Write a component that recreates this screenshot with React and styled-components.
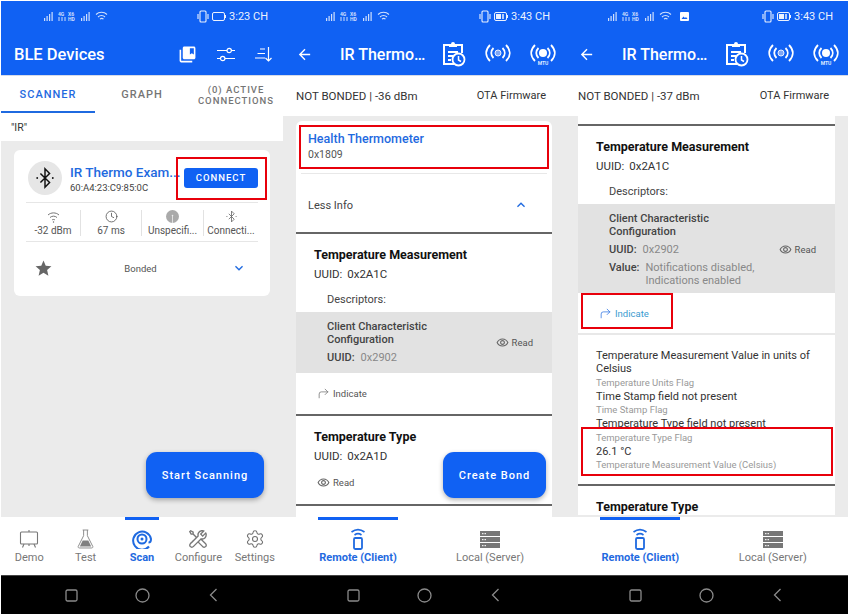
import React from 'react'
import styled, { createGlobalStyle } from 'styled-components'
import { Clock, CornerUpRight, Settings } from 'lucide-react'
import { MdStar, MdKeyboardArrowDown, MdKeyboardArrowUp, MdOutlineRemoveRedEye, MdCollectionsBookmark, MdArrowBack } from 'react-icons/md'
import { LiaToolsSolid } from 'react-icons/lia'

const BLUE = '#1061f3'

const GlobalStyle = createGlobalStyle`
	html, body {
		margin: 0;
		background: #fff;
		font-family: Roboto, 'Liberation Sans', sans-serif;
	}
`

const Page = styled.div`
	display: grid;
	grid-template-columns: 282px 282px 283px;
	padding: 1px 0 0 1px;
	width: 849px;
	box-sizing: border-box;
`

const Phone = styled.div`
	position: relative;
	display: flex;
	flex-direction: column;
	height: 613px;
	overflow: hidden;
	background: #ebebeb;
`

const StatusRow = styled.div`
	display: flex;
	align-items: center;
	justify-content: space-between;
	height: 30px;
	padding: 0 15px 0 43px;
	background: ${BLUE};
	color: #fff;
	flex: none;
`

const StatusLeft = styled.div`
	display: flex;
	align-items: center;
	gap: 8px;
`

const StatusRight = styled.div`
	display: flex;
	align-items: center;
	gap: 3px;
	font-size: 11px;
	opacity: 0.92;
`

const Toolbar = styled.div`
	display: flex;
	align-items: center;
	height: 42px;
	padding: 2px ${(p) => p.$pad || 11}px 0 13px;
	background: ${BLUE};
	border-bottom: 1px solid #d5dbe8;
	color: #fff;
	flex: none;
`

const ToolbarTitle = styled.div`
	flex: 1;
	font-size: ${(p) => (p.$detail ? 16 : 16.5)}px;
	font-weight: 500;
	margin-left: ${(p) => (p.$detail ? 27 : 0)}px;
`

const ToolbarIcons = styled.div`
	display: flex;
	align-items: center;
	gap: ${(p) => p.$gap}px;
`

const Tabs = styled.div`
	display: grid;
	grid-template-columns: repeat(3, 94px);
	height: 37px;
	background: #fff;
	flex: none;
`

const Tab = styled.div`
	display: flex;
	align-items: center;
	justify-content: center;
	padding-top: 2px;
	text-align: center;
	font-size: ${(p) => (p.$small ? 9.5 : 11)}px;
	line-height: 11px;
	font-weight: 500;
	letter-spacing: 1px;
	color: ${(p) => (p.$active ? '#1f6ae0' : '#757575')};
	border-bottom: 2px solid ${(p) => (p.$active ? '#1f6ae0' : 'transparent')};
`

const FilterRow = styled.div`
	height: 28px;
	padding-left: 10px;
	line-height: 30px;
	font-size: 10.5px;
	color: #333;
	background: #fff;
	flex: none;
`

const Content = styled.div`
	position: relative;
	flex: 1;
	min-height: 0;
	overflow: hidden;
`

const DeviceCard = styled.div`
	margin: 9px 13px 0;
	height: 146px;
	padding: 0 12px;
	background: #fff;
	border-radius: 6px;
	box-sizing: border-box;
`

const DeviceHead = styled.div`
	display: flex;
	align-items: center;
	height: 48px;
	padding-top: 4px;
	border-bottom: 1px solid #e6e6e6;
`

const Avatar = styled.div`
	display: flex;
	align-items: center;
	justify-content: center;
	width: 34px;
	height: 34px;
	margin-left: 2px;
	border-radius: 50%;
	background: #e6e6e6;
	flex: none;
`

const DeviceText = styled.div`
	width: 106px;
	margin-left: 8px;
`

const DeviceName = styled.div`
	font-size: 13.5px;
	font-weight: 500;
	color: #1f6ae0;
	white-space: nowrap;
`

const DeviceAddress = styled.div`
	margin-top: 2px;
	font-size: 9.5px;
	color: #444;
	white-space: nowrap;
`

const ConnectButton = styled.div`
	width: 74px;
	height: 20px;
	margin-left: 8px;
	border-radius: 3px;
	background: ${BLUE};
	color: #fff;
	font-size: 9.5px;
	font-weight: 500;
	letter-spacing: 1px;
	line-height: 20px;
	text-align: center;
`

const Stats = styled.div`
	display: grid;
	grid-template-columns: 54px 61px 62px 55px;
	height: 38px;
	border-bottom: 1px solid #e6e6e6;
`

const Stat = styled.div`
	display: flex;
	flex-direction: column;
	align-items: center;
	justify-content: center;
	gap: 2px;
	margin: 7px 0 5px;
	font-size: 10px;
	color: #555;
	white-space: nowrap;
	border-left: ${(p) => (p.$first ? 'none' : '1px solid #e2e2e2')};
`

const StatIcon = styled.div`
	display: flex;
	align-items: center;
	justify-content: center;
	height: 13px;
	color: #555;
`

const BondRow = styled.div`
	display: grid;
	grid-template-columns: 1fr auto 1fr;
	align-items: center;
	height: 52px;
	padding: 0 11px 0 8px;
	font-size: 9.5px;
	color: #555;
`

const ChevronCell = styled.div`
	display: flex;
	justify-content: flex-end;
	color: #1f6ae0;
`

const Fab = styled.div`
	position: absolute;
	right: 19px;
	bottom: 19px;
	width: ${(p) => p.$width}px;
	height: 46px;
	border-radius: 11px;
	background: ${BLUE};
	color: #fff;
	font-size: 11px;
	font-weight: 500;
	letter-spacing: 1px;
	line-height: 48px;
	text-align: center;
	box-shadow: 0 2px 5px rgba(0, 0, 0, 0.3);
`

const InfoRow = styled.div`
	display: flex;
	justify-content: space-between;
	height: 40px;
	padding: 0 19px 0 13px;
	background: #fff;
	font-size: 11.5px;
	line-height: 40px;
	color: #333;
	flex: none;
`

const OtaLabel = styled.span`
	font-size: 11px;
`

const ServiceCard = styled.div`
	margin: ${(p) => (p.$scrolled ? 0 : 5)}px 13px 0;
	padding-top: ${(p) => (p.$scrolled ? 8 : 0)}px;
	background: #fff;
	border-radius: ${(p) => (p.$scrolled ? 0 : '6px 6px 0 0')};
`

const ServiceHead = styled.div`
	height: 52px;
	padding: 11px 12px 0;
	box-sizing: border-box;
`

const ServiceName = styled.div`
	font-size: 12.5px;
	font-weight: 500;
	color: #1f6ae0;
	line-height: 14px;
`

const ServiceId = styled.div`
	margin-top: 2px;
	font-size: 10.5px;
	color: #555;
`

const LessInfo = styled.div`
	display: flex;
	align-items: center;
	justify-content: space-between;
	height: 59px;
	margin: 0 5px;
	padding: 4px 18px 0 7px;
	border-top: 1px solid #e8e8e8;
	font-size: 11px;
	color: #444;
	box-sizing: border-box;
`

const Characteristic = styled.div`
	border-top: 2px solid #666;
	padding-top: 13px;
`

const CharTitle = styled.div`
	padding-left: 18px;
	font-size: 12.5px;
	font-weight: 700;
	line-height: 16px;
	color: #111;
`

const CharUuid = styled.div`
	margin-top: 3px;
	padding-left: 18px;
	font-size: 11.5px;
	line-height: 16px;
	color: #333;
	word-spacing: 2px;
`

const DescriptorsLabel = styled.div`
	margin: 10px 0 4px;
	padding-left: 31px;
	font-size: 11px;
	line-height: 16px;
	color: #444;
`

const DescriptorRow = styled.div`
	display: flex;
	align-items: center;
	justify-content: space-between;
	padding: 8px 19px ${(p) => (p.$withValue ? 6 : 9)}px 31px;
	background: #e2e2e2;
`

const DescriptorName = styled.div`
	font-size: 11px;
	font-weight: 500;
	line-height: 13px;
	color: #444;
`

const DescriptorLine = styled.div`
	display: flex;
	gap: 6px;
	margin-top: 5px;
	font-size: 11px;
	line-height: 13px;
	color: #888;
`

const DescriptorKey = styled.span`
	font-weight: 500;
	color: #444;
`

const Action = styled.div`
	display: flex;
	align-items: center;
	gap: 3px;
	font-size: 9.5px;
	color: ${(p) => (p.$blue ? '#3a9bd0' : '#555')};
`

const ActionIcon = styled.span`
	display: flex;
	color: ${(p) => (p.$blue ? '#1f6ae0' : '#666')};
`

const ActionRow = styled.div`
	display: flex;
	align-items: center;
	height: ${(p) => p.$height}px;
	padding: 0 0 ${(p) => p.$lift || 0}px 21px;
`

const ValueBlock = styled.div`
	border-top: 2px solid #e8e8e8;
	padding: 14px 14px 12px 18px;
`

const ValueMain = styled.div`
	font-size: 11px;
	line-height: 13px;
	color: #333;
`

const ValueSub = styled.div`
	margin: 0.75px 0;
	font-size: 9.5px;
	line-height: 13px;
	color: #999;
`

const BottomNav = styled.div`
	display: grid;
	grid-template-columns: repeat(${(p) => p.$cols}, 1fr);
	height: 58px;
	padding: 0 ${(p) => p.$pad || 0}px;
	background: #fff;
	flex: none;
`

const NavItem = styled.div`
	position: relative;
	display: flex;
	flex-direction: column;
	align-items: center;
	padding-top: 11px;
	font-size: 11px;
	font-weight: ${(p) => (p.$active ? 700 : 400)};
	color: ${(p) => (p.$active ? '#1f6ae0' : '#777')};
	white-space: nowrap;
`

const NavIcon = styled.div`
	display: flex;
	align-items: center;
	justify-content: center;
	height: 22px;
	margin-bottom: 1px;
`

const NavMark = styled.span`
	position: absolute;
	top: 0;
	left: 50%;
	width: ${(p) => p.$width}px;
	height: 3px;
	margin-left: ${(p) => -p.$width / 2}px;
	background: ${BLUE};
`

const SystemBar = styled.div`
	display: grid;
	grid-template-columns: repeat(3, 71px);
	justify-content: center;
	align-items: center;
	height: 39px;
	background: #000;
	border-top: 1px solid #444;
	box-sizing: border-box;
	flex: none;
`

const SystemCell = styled.div`
	display: flex;
	justify-content: center;
`

const Callout = styled.div`
	position: absolute;
	left: ${(p) => p.$x}px;
	top: ${(p) => p.$y}px;
	width: ${(p) => p.$w}px;
	height: ${(p) => p.$h}px;
	border: 2px solid #e8000b;
	box-sizing: border-box;
	pointer-events: none;
`

function SignalIcons() {
	return (
		<svg width="64" height="12" viewBox="0 0 64 12" fill="#fff" opacity="0.8">
			<rect x="0" y="8" width="1.2" height="3" />
			<rect x="2.5" y="6" width="1.2" height="5" />
			<rect x="5" y="4" width="1.2" height="7" />
			<rect x="7.5" y="2" width="1.2" height="9" />
			<text x="14" y="5.5" fontSize="5" fontWeight="700" fontFamily="Roboto">4G</text>
			<path d="M15 7v4M18 7v4M21 7v4" stroke="#fff" strokeWidth="1" />
			<text x="24" y="5.5" fontSize="5" fontWeight="700" fontFamily="Roboto">X6</text>
			<text x="24" y="11" fontSize="5" fontWeight="700" fontFamily="Roboto">HD</text>
			<rect x="37" y="8" width="1.2" height="3" />
			<rect x="39.5" y="6" width="1.2" height="5" />
			<rect x="42" y="4" width="1.2" height="7" />
			<rect x="44.5" y="2" width="1.2" height="9" />
			<g fill="none" stroke="#fff" strokeWidth="1.1">
				<path d="M52 4.5c3-3 8-3 11 0" />
				<path d="M54 7c2-2 5-2 7 0" />
				<path d="M56 9.2c1-1 2.500-1 3.500 0" />
			</g>
		</svg>
	)
}

function PictureIcon() {
	return (
		<svg width="9" height="9" viewBox="0 0 9 9">
			<rect width="9" height="9" rx="1" fill="#fff" />
			<path d="M1.500 7l2-2.500 1.500 1.500 1-1 1.500 2z" fill={BLUE} />
		</svg>
	)
}

function VibrateIcon() {
	return (
		<svg width="12" height="13" viewBox="0 0 12 13" fill="none" stroke="#fff" strokeWidth="1.1">
			<rect x="3" y="1" width="6" height="11" rx="1" />
			<path d="M1 4v5M11 4v5" />
		</svg>
	)
}

function BatteryIcon({ charged }) {
	return (
		<svg width="14" height="9" viewBox="0 0 14 9" fill="none" stroke="#fff" strokeWidth="1">
			<rect x="0.500" y="0.500" width="12" height="8" rx="1.500" />
			{charged && <rect x="2" y="2" width="5" height="5" fill="#fff" stroke="none" />}
			{charged && <path d="M9 2v5" strokeWidth="1.500" />}
			<path d="M13.500 3v3" />
		</svg>
	)
}

function StatusBar({ time, charged, picture }) {
	return (
		<StatusRow>
			<StatusLeft>
				<SignalIcons />
				{picture && <PictureIcon />}
			</StatusLeft>
			<StatusRight>
				<VibrateIcon />
				<BatteryIcon charged={charged} />
				<span>{time}</span>
			</StatusRight>
		</StatusRow>
	)
}

function TuneIcon() {
	return (
		<svg width="18" height="15" viewBox="0 0 18 15" fill="none" stroke="#fff" strokeWidth="1.200">
			<path d="M0 3.500h10M14.500 3.500H18M0 11.500h3.500M8 11.500h10" />
			<circle cx="12.200" cy="3.500" r="2.200" />
			<circle cx="5.700" cy="11.500" r="2.200" />
		</svg>
	)
}

function SortIcon() {
	return (
		<svg width="17" height="15" viewBox="0 0 17 15" fill="none" stroke="#fff" strokeWidth="1.200">
			<path d="M5 2h5M2.500 6.500H10M0 11h10M13.500 0v14M10.500 11l3 3 3-3" />
		</svg>
	)
}

function ClipboardClockIcon() {
	return (
		<svg width="24" height="26" viewBox="0 0 24 26" fill="none" stroke="#fff" strokeWidth="2">
			<path d="M8 4H2v19h10" />
			<path d="M14 4h6v8" />
			<path d="M7 6V3h2a2 2 0 0 1 4 0h2v3z" fill="#fff" stroke="none" />
			<path d="M6 11h10M6 15h5M6 19h3" strokeWidth="1.800" />
			<circle cx="16.500" cy="18.500" r="6" fill={BLUE} strokeWidth="1.800" />
			<path d="M16.500 15v4l2.500 1.500" strokeWidth="1.500" />
		</svg>
	)
}

function BroadcastIcon({ mtu }) {
	return (
		<svg width="26" height="24" viewBox="0 0 26 24" fill="none" stroke="#fff" strokeWidth="1.800">
			<path d="M5 3C0 8 0 14 5 19M21 3c5 5 5 11 0 16" />
			<path d="M8.500 6c-3 3-3 7 0 10M17.500 6c3 3 3 7 0 10" />
			{mtu ? (
				<>
					<circle cx="13" cy="11" r="4" fill="#fff" stroke="none" />
					<text x="13" y="22.500" fontSize="5" fontWeight="700" fontFamily="Roboto" fill="#dfe8ff" stroke="none" textAnchor="middle">MTU</text>
				</>
			) : (
				<circle cx="13" cy="11" r="3" strokeWidth="1" fill="#7ea6f5" stroke="#e8efff" />
			)}
		</svg>
	)
}

function BluetoothGlyph({ size, color, width }) {
	return (
		<svg width={size} height={size} viewBox="0 0 24 24" fill="none" stroke={color} strokeWidth={width}>
			<path d="M7 7l10 10-5 5V2l5 5L7 17" />
			<circle cx="3.500" cy="12" r="1" fill={color} stroke="none" />
			<circle cx="20.500" cy="12" r="1" fill={color} stroke="none" />
		</svg>
	)
}

function WifiThin() {
	return (
		<svg width="13" height="12" viewBox="0 0 13 12" fill="none" stroke="#666" strokeWidth="0.900">
			<path d="M1 4c3-2.800 8-2.800 11 0M3 6.500c2-1.800 5-1.800 7 0M5 9c.8-.7 2.200-.7 3 0" />
			<circle cx="6.500" cy="11" r="0.700" fill="#666" stroke="none" />
		</svg>
	)
}

function UnspecifiedIcon() {
	return (
		<svg width="13" height="13" viewBox="0 0 13 13">
			<circle cx="6.500" cy="6.500" r="6.500" fill="#aaa" />
			<path d="M6.500 6v7" stroke="#eee" strokeWidth="0.800" />
			<circle cx="6.500" cy="5.500" r="0.800" fill="#eee" />
		</svg>
	)
}

function DemoIcon() {
	return (
		<svg width="20" height="20" viewBox="0 0 20 20" fill="none" stroke="#777" strokeWidth="1.100">
			<path d="M10 1v2" />
			<rect x="1.500" y="3" width="17" height="12" rx="1" />
			<path d="M5 15l-1.500 3.500M15 15l1.500 3.500M10 15v2" />
		</svg>
	)
}

function FlaskIcon() {
	return (
		<svg width="17" height="20" viewBox="0 0 18 21" fill="none" stroke="#888" strokeWidth="1">
			<path d="M6 1h6M7 1v6L1.500 18a1.200 1.200 0 0 0 1 2h13a1.200 1.200 0 0 0 1-2L11 7V1" />
			<path d="M6 12h6l3 6.500H3z" fill="#808080" stroke="none" />
		</svg>
	)
}

function ScanIcon() {
	return (
		<svg width="20" height="20" viewBox="0 0 20 20" fill="none" stroke="#1f6ae0" strokeWidth="2">
			<path d="M17 17.500A9 9 0 1 1 19 10c0 2-1 3.500-2.500 3.500" />
			<circle cx="10" cy="10" r="4.500" />
			<circle cx="10" cy="10" r="1.500" fill="#1f6ae0" stroke="none" />
		</svg>
	)
}

function RemoteIcon() {
	return (
		<svg width="20" height="22" viewBox="0 0 20 22" fill="none" stroke="#1f6ae0" strokeWidth="1.600">
			<path d="M3.500 4c4-3 9-3 13 0M6.500 7c2-1.500 5-1.500 7 0" />
			<rect x="6" y="10" width="8" height="11" rx="1.200" strokeWidth="1.800" />
		</svg>
	)
}

function ServerIcon() {
	return (
		<svg width="20" height="17" viewBox="0 0 20 17">
			{[0, 6, 12].map((y) => (
				<g key={y}>
					<rect y={y} width="20" height="5" fill="#777" />
					<rect x="2" y={y + 2} width="1.500" height="1.200" fill="#eee" />
					<rect x="4.500" y={y + 2} width="1.500" height="1.200" fill="#eee" />
				</g>
			))}
		</svg>
	)
}

function SystemIcons() {
	return (
		<SystemBar>
			<SystemCell>
				<svg width="13" height="13" viewBox="0 0 13 13" fill="none" stroke="#8a8a8a" strokeWidth="1.300">
					<rect x="1" y="1" width="11" height="11" rx="1.500" />
				</svg>
			</SystemCell>
			<SystemCell>
				<svg width="15" height="15" viewBox="0 0 15 15" fill="none" stroke="#8a8a8a" strokeWidth="1.300">
					<circle cx="7.500" cy="7.500" r="6.500" />
				</svg>
			</SystemCell>
			<SystemCell>
				<svg width="9" height="14" viewBox="0 0 9 14" fill="none" stroke="#8a8a8a" strokeWidth="1.300">
					<path d="M7.500 1L1.500 7l6 6" />
				</svg>
			</SystemCell>
		</SystemBar>
	)
}

function ScannerPhone() {
	const stats = [
		{ icon: <WifiThin />, label: '-32 dBm' },
		{ icon: <Clock size={13} strokeWidth={1.5} />, label: '67 ms' },
		{ icon: <UnspecifiedIcon />, label: 'Unspecifi...' },
		{ icon: <BluetoothGlyph size={13} color="#666" width={1.500} />, label: 'Connecti...' },
	]
	const nav = [
		{ label: 'Demo', icon: <DemoIcon /> },
		{ label: 'Test', icon: <FlaskIcon /> },
		{ label: 'Scan', icon: <ScanIcon />, active: true },
		{ label: 'Configure', icon: <LiaToolsSolid size={22} color="#777" /> },
		{ label: 'Settings', icon: <Settings size={20} color="#707070" strokeWidth={1.300} /> },
	]

	return (
		<Phone>
			<StatusBar time="3:23 CH" />
			<Toolbar>
				<ToolbarTitle>BLE Devices</ToolbarTitle>
				<ToolbarIcons $gap={20}>
					<MdCollectionsBookmark size={19} />
					<TuneIcon />
					<SortIcon />
				</ToolbarIcons>
			</Toolbar>
			<Tabs>
				<Tab $active>SCANNER</Tab>
				<Tab>GRAPH</Tab>
				<Tab $small>(0) ACTIVE CONNECTIONS</Tab>
			</Tabs>
			<FilterRow>"IR"</FilterRow>
			<Content>
				<DeviceCard>
					<DeviceHead>
						<Avatar>
							<BluetoothGlyph size={22} color="#111" width={1.600} />
						</Avatar>
						<DeviceText>
							<DeviceName>IR Thermo Exam...</DeviceName>
							<DeviceAddress>60:A4:23:C9:85:0C</DeviceAddress>
						</DeviceText>
						<ConnectButton>CONNECT</ConnectButton>
					</DeviceHead>
					<Stats>
						{stats.map((s, i) => (
							<Stat key={s.label} $first={i === 0}>
								<StatIcon>{s.icon}</StatIcon>
								{s.label}
							</Stat>
						))}
					</Stats>
					<BondRow>
						<MdStar size={19} color="#666" />
						<span>Bonded</span>
						<ChevronCell>
							<MdKeyboardArrowDown size={16} />
						</ChevronCell>
					</BondRow>
				</DeviceCard>
				<Fab $width={118}>Start Scanning</Fab>
			</Content>
			<BottomNav $cols={5}>
				{nav.map((n) => (
					<NavItem key={n.label} $active={n.active}>
						{n.active && <NavMark $width={34} />}
						<NavIcon>{n.icon}</NavIcon>
						{n.label}
					</NavItem>
				))}
			</BottomNav>
			<SystemIcons />
			<Callout $x={175} $y={156} $w={91} $h={43} />
		</Phone>
	)
}

function DetailChrome({ rssi, picture, fab, children, callouts }) {
	return (
		<Phone>
			<StatusBar time="3:43 CH" charged picture={picture} />
			<Toolbar $pad={9}>
				<MdArrowBack size={17} />
				<ToolbarTitle $detail>IR Thermo…</ToolbarTitle>
				<ToolbarIcons $gap={19}>
					<ClipboardClockIcon />
					<BroadcastIcon />
					<BroadcastIcon mtu />
				</ToolbarIcons>
			</Toolbar>
			<InfoRow>
				<span>NOT BONDED | {rssi} dBm</span>
				<OtaLabel>OTA Firmware</OtaLabel>
			</InfoRow>
			<Content>
				{children}
				{fab && <Fab $width={103}>Create Bond</Fab>}
			</Content>
			<BottomNav $cols={2} $pad={9}>
				<NavItem $active>
					<NavMark $width={80} />
					<NavIcon><RemoteIcon /></NavIcon>
					Remote (Client)
				</NavItem>
				<NavItem>
					<NavIcon><ServerIcon /></NavIcon>
					Local (Server)
				</NavItem>
			</BottomNav>
			<SystemIcons />
			{callouts}
		</Phone>
	)
}

function ReadAction() {
	return (
		<Action>
			<ActionIcon><MdOutlineRemoveRedEye size={13} /></ActionIcon>
			Read
		</Action>
	)
}

function IndicateAction({ blue }) {
	return (
		<ActionRow $height={blue ? 40 : 41}>
			<Action $blue={blue}>
				<ActionIcon $blue={blue}><CornerUpRight size={13} strokeWidth={1.300} /></ActionIcon>
				Indicate
			</Action>
		</ActionRow>
	)
}

function ConfigDescriptor({ value }) {
	return (
		<DescriptorRow $withValue={value}>
			<div>
				<DescriptorName>Client Characteristic<br />Configuration</DescriptorName>
				<DescriptorLine>
					<DescriptorKey>UUID:</DescriptorKey>
					<span>0x2902</span>
				</DescriptorLine>
				{value && (
					<DescriptorLine>
						<DescriptorKey>Value:</DescriptorKey>
						<span>Notifications disabled,<br />Indications enabled</span>
					</DescriptorLine>
				)}
			</div>
			<ReadAction />
		</DescriptorRow>
	)
}

function ServicePhone() {
	return (
		<DetailChrome
			rssi="-36"
			fab
			callouts={<Callout $x={16} $y={124} $w={250} $h={44} />}
		>
			<ServiceCard>
				<ServiceHead>
					<ServiceName>Health Thermometer</ServiceName>
					<ServiceId>0x1809</ServiceId>
				</ServiceHead>
				<LessInfo>
					Less Info
					<MdKeyboardArrowUp size={16} color="#1f6ae0" />
				</LessInfo>
				<Characteristic>
					<CharTitle>Temperature Measurement</CharTitle>
					<CharUuid>UUID: 0x2A1C</CharUuid>
					<DescriptorsLabel>Descriptors:</DescriptorsLabel>
					<ConfigDescriptor />
					<IndicateAction />
				</Characteristic>
				<Characteristic>
					<CharTitle>Temperature Type</CharTitle>
					<CharUuid>UUID: 0x2A1D</CharUuid>
					<ActionRow $height={36} $lift={4}>
						<ReadAction />
					</ActionRow>
				</Characteristic>
				<Characteristic />
			</ServiceCard>
		</DetailChrome>
	)
}

function ValuePhone() {
	return (
		<DetailChrome
			rssi="-37"
			picture
			callouts={
				<>
					<Callout $x={16} $y={292} $w={92} $h={36} />
					<Callout $x={16} $y={426} $w={252} $h={49} />
				</>
			}
		>
			<ServiceCard $scrolled>
				<Characteristic>
					<CharTitle>Temperature Measurement</CharTitle>
					<CharUuid>UUID: 0x2A1C</CharUuid>
					<DescriptorsLabel>Descriptors:</DescriptorsLabel>
					<ConfigDescriptor value />
					<IndicateAction blue />
				</Characteristic>
				<ValueBlock>
					<ValueMain>Temperature Measurement Value in units of Celsius</ValueMain>
					<ValueSub>Temperature Units Flag</ValueSub>
					<ValueMain>Time Stamp field not present</ValueMain>
					<ValueSub>Time Stamp Flag</ValueSub>
					<ValueMain>Temperature Type field not present</ValueMain>
					<ValueSub>Temperature Type Flag</ValueSub>
					<ValueMain>26.1 °C</ValueMain>
					<ValueSub>Temperature Measurement Value (Celsius)</ValueSub>
				</ValueBlock>
				<Characteristic>
					<CharTitle>Temperature Type</CharTitle>
				</Characteristic>
			</ServiceCard>
		</DetailChrome>
	)
}

export default function App() {
	return (
		<Page>
			<GlobalStyle />
			<ScannerPhone />
			<ServicePhone />
			<ValuePhone />
		</Page>
	)
}
